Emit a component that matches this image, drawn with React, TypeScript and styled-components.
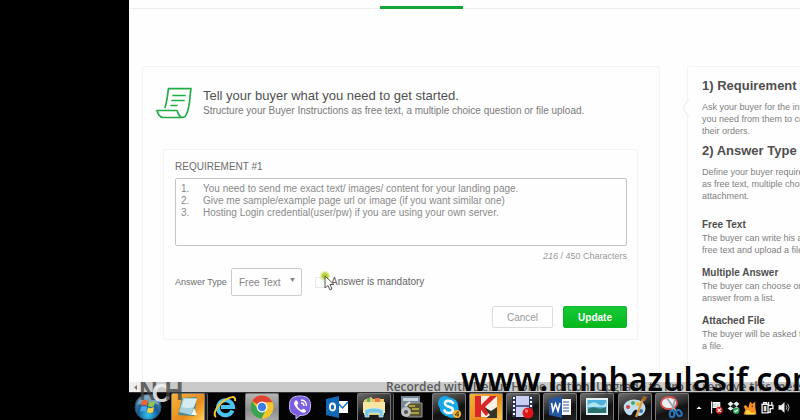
import React from "react";
import styled, { createGlobalStyle, css } from "styled-components";

const GlobalStyle = createGlobalStyle`
  * { box-sizing: border-box; }
  body {
    margin: 0;
    background: #000;
    font-family: "Liberation Sans", Arial, sans-serif;
    color: #555;
  }
  h1, h2, h3, p { margin: 0; }
`;

const Screen = styled.div`
  position: relative;
  display: flex;
  flex-direction: column;
  height: 100vh;
  padding-left: 129px;
  overflow: hidden;
  background: #000;
`;

const Page = styled.main`
  flex: 1;
  min-height: 0;
  overflow: hidden;
  background: #fefefe;
`;

const TabStrip = styled.nav`
  height: 9px;
  padding: 6px 0 0 251px;
  border-bottom: 1px solid #eee;
`;

const ActiveTab = styled.div`
  width: 83px;
  height: 3px;
  background: #12a537;
`;

const Columns = styled.div`
  display: flex;
  gap: 27px;
  padding: 57px 0 0 13px;
`;

const Card = styled.section`
  flex: 1;
  min-width: 0;
  padding: 20px 21px 29px 20px;
  border: 1px solid #f3f3f3;
  border-radius: 3px;
  background: #fefefe;
`;

const CardHeader = styled.header`
  display: flex;
  gap: 11px;
  height: 62px;
  margin-left: -7px;
`;

const CardTitle = styled.h1`
  font-size: 13px;
  font-weight: 400;
  line-height: 17px;
  color: #505050;
  white-space: nowrap;
`;

const CardSubtitle = styled.p`
  font-size: 10px;
  line-height: 14px;
  color: #7a7a7a;
  white-space: nowrap;
`;

const Form = styled.form`
  padding: 10px 10px 11px 11px;
  border: 1px solid #f3f3f3;
  border-radius: 2px;
`;

const FieldLabel = styled.label`
  display: block;
  font-size: 10px;
  line-height: 14px;
  color: #6c6c6c;
  white-space: nowrap;
`;

const RequirementText = styled.textarea`
  display: block;
  width: 100%;
  height: 68px;
  margin-top: 4px;
  padding: 4px 5px;
  border: 1px solid #c4c4c4;
  border-radius: 2px;
  background: #fefefe;
  color: #8a8a8a;
  font: 10px/12px "Liberation Sans", Arial, sans-serif;
  tab-size: 22px;
  resize: none;
  overflow: hidden;
  outline: none;
`;

const Counter = styled.p`
  margin-top: 4px;
  font-size: 9px;
  line-height: 12px;
  text-align: right;
  color: #999;
`;

const AnswerRow = styled.div`
  display: flex;
  align-items: center;
  margin-top: 6px;
`;

const SmallLabel = styled(FieldLabel)`
  width: 56px;
  font-size: 9px;
`;

const SelectWrap = styled.div`
  position: relative;
  width: 71px;
  height: 28px;

  svg {
    position: absolute;
    right: 7px;
    top: 10px;
    pointer-events: none;
  }
`;

const Select = styled.select`
  appearance: none;
  width: 100%;
  height: 100%;
  padding: 0 7px;
  border: 1px solid #ccc;
  border-radius: 2px;
  background: #fefefe;
  color: #858585;
  font: 10px "Liberation Sans", Arial, sans-serif;
`;

const Mandatory = styled.label`
  position: relative;
  display: flex;
  align-items: center;
  gap: 5px;
  margin-left: 13px;
  font-size: 10px;
  line-height: 14px;
  color: #666;
  white-space: nowrap;
`;

const Checkbox = styled.input`
  appearance: none;
  width: 11px;
  height: 11px;
  margin: 0;
  border: 1px solid #e8e8e8;
  border-radius: 1px;
  background: #fefefe;
`;

const Pointer = styled.svg`
  position: absolute;
  left: 3px;
  top: -5px;
`;

const Actions = styled.div`
  display: flex;
  justify-content: flex-end;
  gap: 10px;
  margin-top: 10px;
`;

const Button = styled.button<{ $primary?: boolean }>`
  width: 61px;
  height: 22px;
  padding: 0;
  border: 1px solid #ddd;
  border-radius: 2px;
  background: #fefefe;
  color: #999;
  font: 10px "Liberation Sans", Arial, sans-serif;
  ${(p) =>
    p.$primary &&
    css`
      width: 64px;
      border-color: #10b52c;
      background: linear-gradient(#15c936, #07b71c);
      color: #fff;
      font-weight: 700;
    `}
`;

const Aside = styled.aside`
  position: relative;
  flex: 0 0 113px;
  min-width: 0;
  height: 360px;
  padding: 10px 0 0 14px;
  border: 1px solid #f3f3f3;
  border-right: 0;
  border-radius: 3px 0 0 0;
  white-space: nowrap;
`;

const Notch = styled.svg`
  position: absolute;
  left: -6px;
  top: 32px;
`;

const HelpTitle = styled.h2`
  font-size: 13px;
  line-height: 18px;
  color: #4f4f4f;
`;

const HelpText = styled.p`
  font-size: 9px;
  line-height: 12px;
  color: #808080;
`;

const HelpBlock = styled.div`
  margin-bottom: 5px;

  ${HelpText} {
    margin-top: 6px;
  }
`;

const KindList = styled.div`
  display: grid;
  gap: 10px;
  margin-top: 16px;
`;

const AnswerKindTitle = styled.h3`
  font-size: 10px;
  line-height: 14px;
  color: #4f4f4f;
`;

const ScrollTrack = styled.div`
  display: flex;
  align-items: center;
  height: 10px;
  background: #c9cac9;
`;

const ScrollEnd = styled.div`
  display: grid;
  place-items: center;
  width: 12px;
  height: 10px;
  background: #eee;
`;

const TaskBar = styled.footer`
  display: flex;
  height: 28px;
  padding-left: 3px;
  border-top: 1px solid #333;
  background: #030303;
`;

const StartButton = styled.button`
  width: 39px;
  padding: 0 0 0 2px;
  border: 0;
  background: none;
  text-align: left;

  svg {
    display: block;
  }
`;

const Apps = styled.div`
  flex: 1;
  display: flex;
  justify-content: space-between;
`;

type Tone = "none" | "dark" | "light" | "orange";

const tones: Record<Tone, string> = {
  none: "transparent",
  dark: "linear-gradient(160deg, #6b6b6b, #2d2d2d 45%, #111 60%, #222)",
  light: "linear-gradient(#b5b5b5, #8c8c8c 60%, #a9a9a9)",
  orange: "linear-gradient(135deg, #f2b43e, #e98a1b 60%, #ffd05a)",
};

const AppButton = styled.button<{ $tone: Tone; $stacked?: boolean }>`
  display: flex;
  justify-content: center;
  align-items: center;
  width: 34px;
  height: 27px;
  padding: 0;
  border: 1px solid ${(p) => (p.$tone === "none" ? "transparent" : "#777")};
  border-bottom: 0;
  border-radius: 2px 2px 0 0;
  background: ${(p) => tones[p.$tone]};
  ${(p) => p.$stacked && "box-shadow: 2px 0 0 #1c1c1c, 3px 0 0 #5c5c5c;"}
`;

const Tray = styled.div`
  display: flex;
  align-items: center;
  gap: 3px;
  flex: 0 0 111px;
  padding: 2px 0 0 3px;
`;

const TrayButton = styled.button`
  display: grid;
  place-items: center;
  width: 14px;
  height: 16px;
  padding: 0;
  border: 0;
  background: none;
`;

const RecordedNotice = styled.p`
  position: absolute;
  left: 386px;
  bottom: 25px;
  font: 600 12px/16px "Open Sans", sans-serif;
  color: rgba(50, 50, 50, 0.75);
  white-space: nowrap;
`;

const SiteMark = styled.p`
  position: absolute;
  left: 461px;
  bottom: 21px;
  font: 600 32px/40px "Noto Sans", sans-serif;
  color: #050505;
  white-space: nowrap;
`;

const NchMark = styled.p`
  position: absolute;
  left: 139px;
  bottom: 13px;
  display: flex;
  font: 700 26px/28px "Liberation Sans", Arial, sans-serif;
  color: rgba(65, 65, 65, 0.75);

  b {
    margin: 2px -6px 0;
    color: rgba(245, 245, 245, 0.85);
  }
`;

const Icon = ({ size = 24, children }: { size?: number; children: React.ReactNode }) => (
  <svg width={size} height={size} viewBox="0 0 24 24" aria-hidden="true">
    {children}
  </svg>
);

const ScrollIcon = () => (
  <svg width="36" height="32" viewBox="0 0 36 32" fill="none" stroke="#20ad48" strokeWidth="1.7" strokeLinejoin="round" strokeLinecap="round" aria-hidden="true">
    <path d="M9 20.500 C11 15 11.500 8 12.500 1.700 H35 C33.500 9 34.500 17 31 26 C30 29 28.500 30.500 26 30.500 H7.500 C4 30.500 2 27.500 1 23.500 H21 C22.500 27.500 23.500 30 26.500 30.500" />
    <path d="M17 8.500 H29 M16 13.500 H28 M15 18.500 H21" />
  </svg>
);

const StartOrb = () => (
  <svg width="28" height="28" viewBox="0 0 28 28" aria-hidden="true">
    <defs>
      <radialGradient id="orb" cx="50%" cy="80%" r="75%">
        <stop offset="0" stopColor="#36c4ee" />
        <stop offset=".5" stopColor="#175f9b" />
        <stop offset="1" stopColor="#55809d" />
      </radialGradient>
    </defs>
    <circle cx="14" cy="14" r="13" fill="url(#orb)" stroke="#2b4c68" />
    <path d="M3 12 Q6 2 14 2 Q23 2 25 12 Q15 7 3 12" fill="#c6dce6" opacity=".45" />
    <path d="M8 8 Q11 6 14 8 L13 13 Q10 11 7 13Z" fill="#ee6331" />
    <path d="M15 8.500 Q18 10 21 8 L20 13 Q17 15 14 13Z" fill="#8fc943" />
    <path d="M7 14 Q10 12 13 14 L12 19 Q9 17 6 19Z" fill="#48a8e8" />
    <path d="M14 14.500 Q17 16 20 14 L19 19 Q16 21 13 19Z" fill="#ffd13f" />
  </svg>
);

const apps: { name: string; tone: Tone; stacked?: boolean; icon: React.ReactNode }[] = [
  {
    name: "Sticky Notes",
    tone: "orange",
    stacked: true,
    icon: (
      <Icon>
        <path d="M6 3 L21 2 L18 21 L2 20Z" fill="#4a8794" />
        <path d="M7 3 L21 3 L15 20 L3 17Z" fill="#a9d3dc" />
        <path d="M8 4 L21 4 L18 12 Q12 14 6 12Z" fill="#d5edf1" />
        <path d="M15 20 L18 13 L21 20Z" fill="#eef6f6" />
      </Icon>
    ),
  },
  {
    name: "Internet Explorer",
    tone: "none",
    icon: (
      <Icon>
        <path d="M19.500 15.500 A7.500 7.500 0 1 1 20 12 H8" fill="none" stroke="#4cc3f3" strokeWidth="4" />
        <path d="M3 22 C-1 19 5 9 12 5 C17 2 23 0 22 6" fill="none" stroke="#f4c52f" strokeWidth="2" />
      </Icon>
    ),
  },
  {
    name: "Chrome",
    tone: "light",
    icon: (
      <Icon>
        <circle cx="12" cy="12" r="11.500" fill="#f3c72c" />
        <path d="M12 12 L2 6.250 A11.500 11.500 0 0 1 22.500 7.300 H12Z" fill="#df4432" />
        <path d="M2 6.250 A11.500 11.500 0 0 0 11.500 23.500 L16 14.500 L8 14Z" fill="#38a352" />
        <circle cx="12" cy="12" r="5.400" fill="#fff" />
        <circle cx="12" cy="12" r="4.200" fill="#3f7fe2" />
      </Icon>
    ),
  },
  {
    name: "Viber",
    tone: "none",
    icon: (
      <Icon>
        <path d="M12 1 C20 1 22.500 4 22.500 11 C22.500 18 19 20.500 12 20.500 L8 24 V20 C3 19 1.500 16 1.500 11 C1.500 4 4 1 12 1Z" fill="#7b5fe0" stroke="#c9bdf7" strokeWidth="1" />
        <path d="M7 6 C8 4.500 9 5.500 10 7.500 C11 9.500 8.500 9 9.500 11 C10.500 13 12 14.500 13.500 15 C14.500 15 14.500 13 16 14 C18.500 15.500 18.500 16.500 17 17.500 C14 19 6 12 6 8Z" fill="#fff" />
        <path d="M13 5 Q18.500 5.500 18.500 11 M13 8 Q16 8 16 11" fill="none" stroke="#fff" strokeWidth="1.300" />
      </Icon>
    ),
  },
  {
    name: "Outlook",
    tone: "none",
    icon: (
      <Icon>
        <path d="M12 6 H23 V18 H12Z" fill="#fff" />
        <path d="M12 7 L17.500 13 L23 7" fill="none" stroke="#1972bf" strokeWidth="1.500" />
        <path d="M1 4 L14 1 V23 L1 20Z" fill="#1269b5" />
        <ellipse cx="7.500" cy="12" rx="2.600" ry="3.500" fill="none" stroke="#fff" strokeWidth="1.800" />
      </Icon>
    ),
  },
  {
    name: "Explorer",
    tone: "dark",
    stacked: true,
    icon: (
      <Icon>
        <path d="M2 5 L9 2 L11 4 H22 V20 H2Z" fill="#eac968" />
        <path d="M5 3h3v4H5z" fill="#4fb466" />
        <path d="M13 3h5v4h-5z" fill="#e47d4b" />
        <path d="M1 7 H23 V18 H1Z" fill="#f8e6a2" />
        <path d="M3 22 V15 Q12 11 21 15 V22 H17 V18 H7 V22Z" fill="#75c5e7" stroke="#c4ecf8" strokeWidth=".8" />
      </Icon>
    ),
  },
  {
    name: "Video tools",
    tone: "none",
    icon: (
      <Icon>
        <path d="M2 1 H21 V17 H2Z" fill="#778997" />
        <path d="M4 3 H19 V6 H4Z" fill="#c8d5df" />
        <path d="M8 8 H23 V22 H8Z" fill="#555334" stroke="#999" />
        <path d="M10 11h6M13 14h7M12 18h8" stroke="#ccb83f" strokeWidth="1.500" />
        <circle cx="7" cy="17" r="5" fill="#bfc1c2" />
        <circle cx="7" cy="17" r="2" fill="#555" />
        <path d="M6 11 L11 7" stroke="#ddd" strokeWidth="2" />
      </Icon>
    ),
  },
  {
    name: "Skype",
    tone: "dark",
    icon: (
      <Icon>
        <circle cx="8" cy="8" r="7" fill="#16a9e8" />
        <circle cx="15" cy="16" r="7" fill="#16a9e8" />
        <circle cx="12" cy="12" r="9.500" fill="#16a9e8" />
        <path d="M16 8 C14 5 7 5 8 9 C9 12.500 16 11 16 15 C16 19 9 19 7.500 15.500" fill="none" stroke="#fff" strokeWidth="2.600" strokeLinecap="round" />
        <circle cx="20" cy="19" r="4" fill="#f7b52c" />
        <path d="M21 21.500 V16.500 L18 20 H22" fill="none" stroke="#553600" />
      </Icon>
    ),
  },
  {
    name: "Kaspersky",
    tone: "orange",
    icon: (
      <Icon>
        <path d="M1 1 H23 V22 H1Z" fill="#fff0e5" />
        <path d="M1 1 H7 V10 L16 1 H23 L11 12 L16 17 L12 21 L7 15 V22 H1Z" fill="#dc2626" />
        <path d="M10 12 L17 16 L23 12 V23 H12 L16 20Z" fill="#34342d" />
      </Icon>
    ),
  },
  {
    name: "Debut",
    tone: "dark",
    icon: (
      <Icon>
        <path d="M1 1 H22 V22 H1Z" fill="#c8cff0" />
        <path d="M1 1H5V22H1ZM18 1H22V22H18Z" fill="#2e3158" />
        <path d="M3 2V22M20 2V22" stroke="#fff" strokeWidth="2" strokeDasharray="2 2" />
        <path d="M5 11H18" stroke="#555a8c" strokeWidth="2" />
        <circle cx="17" cy="18" r="5.500" fill="#dc1717" />
        <circle cx="15.500" cy="16" r="1.700" fill="#ff7777" />
      </Icon>
    ),
  },
  {
    name: "Word",
    tone: "dark",
    icon: (
      <Icon>
        <path d="M12 4H23V20H12Z" fill="#fff" />
        <path d="M15 7h6M15 10h6M15 13h6M15 16h6" stroke="#315c9f" strokeWidth="1.200" />
        <path d="M1 4L14 1V23L1 20Z" fill="#2456a2" />
        <path d="M3.500 8L5 16L7.500 9L10 16L12 8" fill="none" stroke="#fff" strokeWidth="1.600" />
      </Icon>
    ),
  },
  {
    name: "Pictures",
    tone: "dark",
    icon: (
      <Icon>
        <path d="M1 3H23V20H1Z" fill="#e4f1f5" />
        <path d="M2.500 5H21.500V18H2.500Z" fill="#4fb1dc" />
        <path d="M3 10Q8 5 13 9T21 7V12H3Z" fill="#b3e2ef" />
        <path d="M3 14Q8 11 12 13T21 12V18H3Z" fill="#2b746d" />
      </Icon>
    ),
  },
  {
    name: "Paint",
    tone: "dark",
    icon: (
      <Icon>
        <path d="M1 14C-1 7 8 3 15 5C22 7 25 14 20 19C16 23 13 20 14 17C15 13 10 15 9 19C7 22 2 19 1 14Z" fill="#c0dfee" />
        <circle cx="5" cy="12" r="2" fill="#d43e36" />
        <circle cx="10" cy="8" r="2" fill="#51a556" />
        <circle cx="15" cy="9" r="2" fill="#e5bd39" />
        <circle cx="18" cy="16" r="2" fill="#3578bc" />
        <path d="M13 22L20 4" stroke="#dc9b43" strokeWidth="2.200" />
        <path d="M19 6L20 1L24 2L22 6Z" fill="#a76528" />
      </Icon>
    ),
  },
  {
    name: "Snipping Tool",
    tone: "dark",
    icon: (
      <Icon>
        <ellipse cx="9" cy="8" rx="8" ry="6" fill="#f0eeee" stroke="#d85151" strokeWidth="1.800" />
        <path d="M7 3L16 16M15 4L12 16" stroke="#98a7ae" strokeWidth="1.700" />
        <ellipse cx="12" cy="19" rx="2.300" ry="3.300" fill="none" stroke="#2577bd" strokeWidth="2" />
        <ellipse cx="19" cy="18" rx="2.300" ry="3.300" fill="none" stroke="#2577bd" strokeWidth="2" transform="rotate(-35 19 18)" />
      </Icon>
    ),
  },
];

const tray: { name: string; icon: React.ReactNode }[] = [
  { name: "Show hidden icons", icon: <Icon size={12}><path d="M7 14L12 9L17 14Z" fill="#fff" /></Icon> },
  {
    name: "Action Center",
    icon: <Icon size={13}><path d="M3 1V23M5 3H18V12H5" stroke="#fff" strokeWidth="2" fill="#ddd" /><circle cx="17" cy="17" r="6.500" fill="#d52a24" /><path d="M14 14L20 20M20 14L14 20" stroke="#fff" strokeWidth="2" /></Icon>,
  },
  {
    name: "Dropbox",
    icon: <Icon size={13}><path d="M1 5L7 1L12 5L17 1L23 5L18 10L23 14L17 18L12 14L7 18L1 14L6 10Z" fill="#e8eeee" /><path d="M6 10L12 5L18 10L12 14Z" fill="#222" /><circle cx="17" cy="18" r="6" fill="#28a75a" /><path d="M14 18L16 20L20 16" stroke="#fff" strokeWidth="2" fill="none" /></Icon>,
  },
  {
    name: "Antivirus",
    icon: <Icon size={14}><path d="M10 8L12 1L16 5L21 1V10L23 23H1L4 15L1 9L5 7L9 12Z" fill="#f59122" /><path d="M4 19Q9 13 12 18T20 19V23H5Z" fill="#ffd63c" /><circle cx="16" cy="9" r="1.500" fill="#733510" /></Icon>,
  },
  {
    name: "Power",
    icon: <Icon size={13}><path d="M2 6H13V22H2ZM5 6V3H10V6M14 2V8M20 2V8M12 8H22V14H17V21H13" fill="none" stroke="#eee" strokeWidth="2.500" /><path d="M5 9H10V19H5Z" fill="#ddd" /></Icon>,
  },
  {
    name: "Volume",
    icon: <Icon size={13}><path d="M1 8H6L12 2V22L6 16H1Z" fill="#eee" /><path d="M15 8Q18 12 15 16M18 5Q23 12 18 19" fill="none" stroke="#bbb" strokeWidth="1.800" /></Icon>,
  },
];

const requirement =
  "1.\tYou need to send me exact text/ images/ content for your landing page.\n" +
  "2.\tGive me sample/example page url or image (if you want similar one)\n" +
  "3.\tHosting Login credential(user/pw) if you are using your own server.";

const steps = [
  { title: "1) Requirement", lines: ["Ask your buyer for the information", "you need from them to create", "their orders."] },
  { title: "2) Answer Type", lines: ["Define your buyer requirements", "as free text, multiple choice or", "attachment."] },
];

const kinds = [
  { title: "Free Text", lines: ["The buyer can write his answer in", "free text and upload a file."] },
  { title: "Multiple Answer", lines: ["The buyer can choose one", "answer from a list."] },
  { title: "Attached File", lines: ["The buyer will be asked to attach", "a file."] },
];

const Lines = ({ lines }: { lines: string[] }) => (
  <HelpText>
    {lines.map((line, i) => (
      <React.Fragment key={line}>
        {i > 0 && <br />}
        {line}
      </React.Fragment>
    ))}
  </HelpText>
);

export default function App() {
  return (
    <>
      <GlobalStyle />
      <Screen>
        <Page>
          <TabStrip>
            <ActiveTab />
          </TabStrip>
          <Columns>
            <Card>
              <CardHeader>
                <ScrollIcon />
                <div>
                  <CardTitle>Tell your buyer what you need to get started.</CardTitle>
                  <CardSubtitle>
                    Structure your Buyer Instructions as free text, a multiple choice question or file upload.
                  </CardSubtitle>
                </div>
              </CardHeader>
              <Form onSubmit={(e) => e.preventDefault()}>
                <FieldLabel htmlFor="requirement">REQUIREMENT #1</FieldLabel>
                <RequirementText id="requirement" spellCheck={false} defaultValue={requirement} />
                <Counter>
                  <em>216</em> / 450 Characters
                </Counter>
                <AnswerRow>
                  <SmallLabel htmlFor="answer-type">Answer Type</SmallLabel>
                  <SelectWrap>
                    <Select id="answer-type" defaultValue="Free Text">
                      <option>Free Text</option>
                    </Select>
                    <svg width="5" height="4" viewBox="0 0 5 4" aria-hidden="true">
                      <path d="M0 0H5L2.500 4Z" fill="#888" />
                    </svg>
                  </SelectWrap>
                  <Mandatory>
                    <Checkbox type="checkbox" />
                    Answer is mandatory
                    <Pointer width="18" height="22" viewBox="0 0 18 22" aria-hidden="true">
                      <defs>
                        <radialGradient id="glow">
                          <stop offset="0" stopColor="#a9c814" />
                          <stop offset=".5" stopColor="#c2d94c" />
                          <stop offset="1" stopColor="#e5efac" stopOpacity="0" />
                        </radialGradient>
                      </defs>
                      <circle cx="7" cy="6" r="6" fill="url(#glow)" />
                      <path d="M7 6V18L10 15.500L12 20L14 19L12 14.500H16Z" fill="#fff" stroke="#555" />
                    </Pointer>
                  </Mandatory>
                </AnswerRow>
                <Actions>
                  <Button type="button">Cancel</Button>
                  <Button type="submit" $primary>
                    Update
                  </Button>
                </Actions>
              </Form>
            </Card>
            <Aside>
              <Notch width="7" height="18" viewBox="0 0 7 18" aria-hidden="true">
                <path d="M7 0L1 9L7 18" fill="#fefefe" stroke="#e9e9e9" />
              </Notch>
              {steps.map((s) => (
                <HelpBlock key={s.title}>
                  <HelpTitle>{s.title}</HelpTitle>
                  <Lines lines={s.lines} />
                </HelpBlock>
              ))}
              <KindList>
                {kinds.map((k) => (
                  <div key={k.title}>
                    <AnswerKindTitle>{k.title}</AnswerKindTitle>
                    <Lines lines={k.lines} />
                  </div>
                ))}
              </KindList>
            </Aside>
          </Columns>
        </Page>
        <ScrollTrack>
          <ScrollEnd>
            <svg width="3" height="5" viewBox="0 0 3 5" aria-hidden="true">
              <path d="M3 0V5L0 2.500Z" fill="#777" />
            </svg>
          </ScrollEnd>
        </ScrollTrack>
        <TaskBar>
          <StartButton aria-label="Start">
            <StartOrb />
          </StartButton>
          <Apps>
            {apps.map((a) => (
              <AppButton key={a.name} $tone={a.tone} $stacked={a.stacked} aria-label={a.name}>
                {a.icon}
              </AppButton>
            ))}
          </Apps>
          <Tray>
            {tray.map((t) => (
              <TrayButton key={t.name} aria-label={t.name}>
                {t.icon}
              </TrayButton>
            ))}
          </Tray>
        </TaskBar>
        <NchMark>
          N<b>C</b>H
        </NchMark>
        <RecordedNotice>Recorded with Debut Home Edition. Upgrade to Pro to remove this message</RecordedNotice>
        <SiteMark>www.minhazulasif.com</SiteMark>
      </Screen>
    </>
  );
}
